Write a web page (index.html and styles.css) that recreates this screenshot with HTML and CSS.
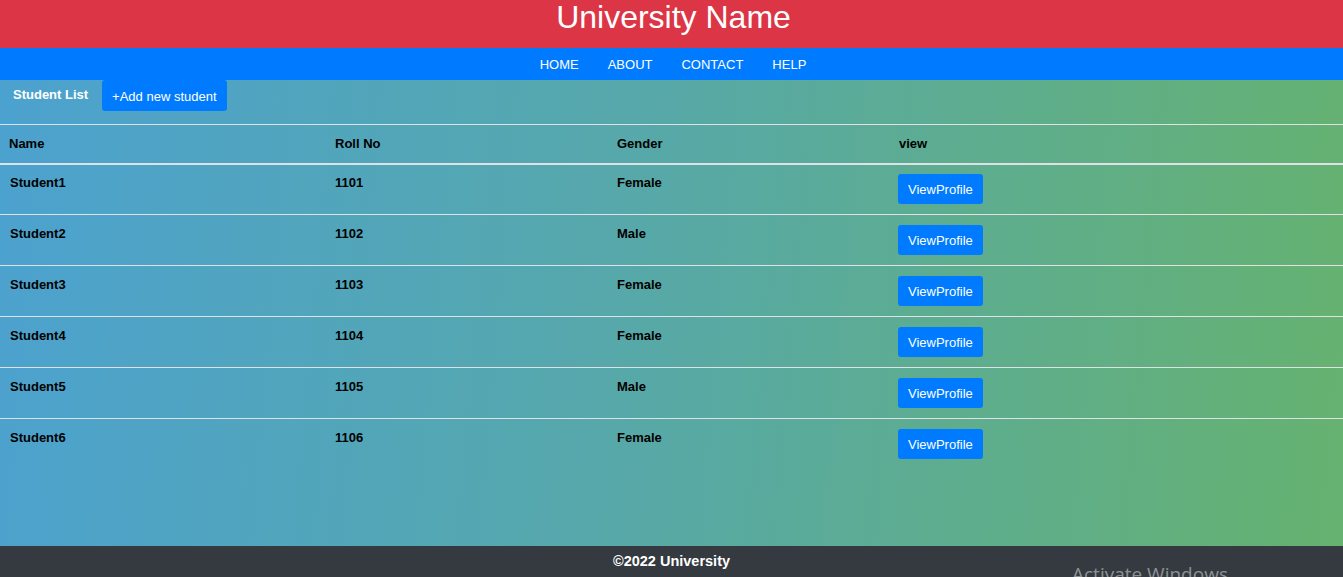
FILE: index.html
```html
<!DOCTYPE html>
<html>
<head>
<meta charset="utf-8">
<title>University</title>
<link rel="stylesheet" href="styles.css">
</head>
<body>
<div class="page">
  <header class="brand">University Name</header>
  <nav class="menu">
    <a class="menu-link" href="#">HOME</a>
    <a class="menu-link" href="#">ABOUT</a>
    <a class="menu-link" href="#">CONTACT</a>
    <a class="menu-link" href="#">HELP</a>
  </nav>
  <main class="content">
    <div class="tabs">
      <span class="tab-label">Student List</span>
      <button class="btn btn-add">+Add new student</button>
    </div>
    <table class="students">
      <colgroup>
        <col class="c-name"><col class="c-roll"><col class="c-gender"><col>
      </colgroup>
      <thead>
        <tr><th>Name</th><th>Roll No</th><th>Gender</th><th>view</th></tr>
      </thead>
      <tbody>
        <tr><td>Student1</td><td>1101</td><td>Female</td><td><button class="btn">ViewProfile</button></td></tr>
        <tr><td>Student2</td><td>1102</td><td>Male</td><td><button class="btn">ViewProfile</button></td></tr>
        <tr><td>Student3</td><td>1103</td><td>Female</td><td><button class="btn">ViewProfile</button></td></tr>
        <tr><td>Student4</td><td>1104</td><td>Female</td><td><button class="btn">ViewProfile</button></td></tr>
        <tr><td>Student5</td><td>1105</td><td>Male</td><td><button class="btn">ViewProfile</button></td></tr>
        <tr><td>Student6</td><td>1106</td><td>Female</td><td><button class="btn">ViewProfile</button></td></tr>
      </tbody>
    </table>
  </main>
  <footer class="footer">©2022 University</footer>
  <div class="watermark">Activate Windows</div>
</div>
</body>
</html>
```

FILE: styles.css
```css
* { box-sizing: border-box; }
html, body { margin: 0; padding: 0; }
body {
  font-family: "Liberation Sans", Arial, sans-serif;
  overflow: hidden;
}
.page {
  height: 577px;
  display: flex;
  flex-direction: column;
  position: relative;
  overflow: hidden;
}
.brand {
  background: #dc3545;
  color: #fff;
  height: 48px;
  text-align: center;
  font-size: 32px;
  line-height: 34px;
  padding-left: 4px;
}
.menu {
  background: #007bff;
  height: 32px;
  display: flex;
  justify-content: center;
  align-items: center;
  padding-left: 3px;
}
.menu-link {
  color: #fff;
  text-decoration: none;
  font-size: 13px;
  padding: 0 14.5px;
}
.content {
  flex: 1;
  background: linear-gradient(95deg, #4ca2cf 0%, #56a8ab 45%, #66b270 100%);
}
.tabs {
  display: flex;
  align-items: flex-start;
  height: 44px;
}
.tab-label {
  color: #fff;
  font-weight: bold;
  font-size: 13px;
  padding: 7px 14px 0 13px;
}
.btn {
  background: #007bff;
  color: #fff;
  border: none;
  border-radius: 3px;
  font-family: "Liberation Sans", Arial, sans-serif;
  font-size: 13px;
  padding: 0 10px;
  height: 30px;
  white-space: nowrap;
  cursor: pointer;
}
.btn-add {
  height: 31px;
  padding-top: 1px;
}
.students {
  width: 100%;
  border-collapse: collapse;
  table-layout: fixed;
  font-size: 13px;
  font-weight: bold;
  color: #000;
}
.c-name { width: 326px; }
.c-roll { width: 282px; }
.c-gender { width: 282px; }
.students th, .students td {
  text-align: left;
  vertical-align: top;
  padding: 10px 9px 10px;
  line-height: 18px;
  border-top: 1px solid #dee2e6;
}
.students thead th {
  border-bottom: 2px solid #dee2e6;
}
.students tbody tr:first-child td {
  border-top: none;
  padding-top: 9px;
}
.students td:first-child { padding-left: 10px; }
.students td:last-child { padding-left: 8px; }
.students td .btn { display: block; }
.footer {
  background: #343a40;
  color: #fff;
  height: 31px;
  line-height: 31px;
  text-align: center;
  font-weight: bold;
  font-size: 14.5px;
  flex-shrink: 0;
}
.watermark {
  position: absolute;
  left: 1072px;
  top: 561px;
  color: rgba(255, 255, 255, 0.45);
  font-family: "Open Sans", sans-serif;
  font-size: 19px;
  white-space: nowrap;
}
```
